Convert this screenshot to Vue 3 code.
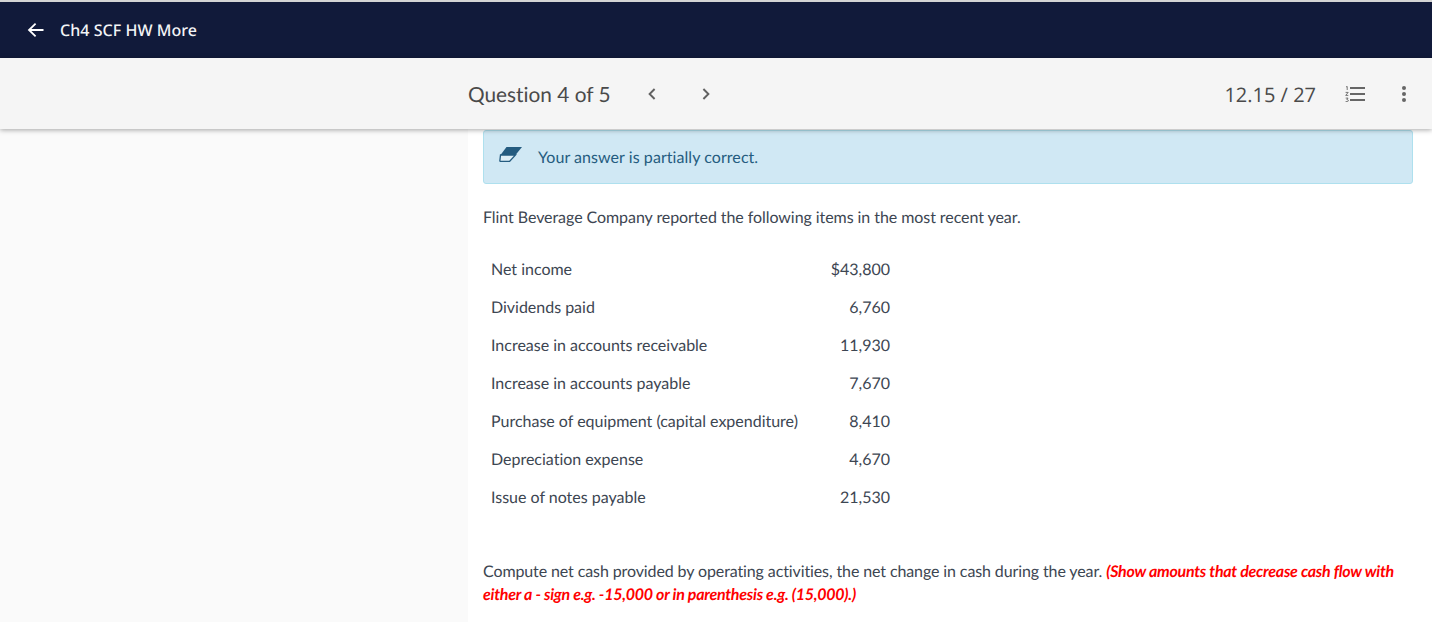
<script setup>
const rows = [
  ['Net income', '$43,800'],
  ['Dividends paid', '6,760'],
  ['Increase in accounts receivable', '11,930'],
  ['Increase in accounts payable', '7,670'],
  ['Purchase of equipment (capital expenditure)', '8,410'],
  ['Depreciation expense', '4,670'],
  ['Issue of notes payable', '21,530'],
]
</script>

<template>
  <div class="page">
    <header class="topbar">
      <svg class="back" width="18" height="18" viewBox="0 0 18 18">
        <path d="M16.5 9H2M8.6 2.6 2 9l6.6 6.4" fill="none" stroke="#fff" stroke-width="1.8" />
      </svg>
      <span class="title">Ch4 SCF HW More</span>
    </header>

    <div class="subbar">
      <div class="sub-inner">
        <span class="qnum">Question 4 of 5</span>
        <svg class="chev prev" width="10" height="14" viewBox="0 0 10 14">
          <path d="M7.6 2 2.6 7l5 5" fill="none" stroke="#616161" stroke-width="1.9" />
        </svg>
        <svg class="chev next" width="10" height="14" viewBox="0 0 10 14">
          <path d="M2.4 2l5 5-5 5" fill="none" stroke="#616161" stroke-width="1.9" />
        </svg>
        <span class="score">12.15 / 27</span>
        <svg class="list" width="20" height="16" viewBox="0 0 20 16">
          <path d="M5 2h15M5 8h15M5 14h15" stroke="#666" stroke-width="1.8" />
          <path d="M1 1 2.200.4V4M.6 6.400h2.600L.7 9.400h2.600M.7 12.100h2.400L1.800 13.400h.5l.9.600v1.100l-.9.500H.6" fill="none" stroke="#666" stroke-width=".9" />
        </svg>
        <svg class="dots" width="6" height="18" viewBox="0 0 6 18">
          <circle cx="3" cy="3" r="2" fill="#666" />
          <circle cx="3" cy="9" r="2" fill="#666" />
          <circle cx="3" cy="15" r="2" fill="#666" />
        </svg>
      </div>
    </div>

    <div class="body">
      <aside class="side"></aside>
      <main class="content">
        <div class="notice">
          <svg class="eraser" width="24" height="16" viewBox="0 0 24 16">
            <path d="M7.500 1H23l-6.500 8H1.500z" fill="#255c80" />
            <path d="M1.500 9h15l-6 6.500H1.800q-1.200 0-.9-1.200z" fill="#fff" fill-opacity=".3" stroke="#255c80" stroke-width="1.300" />
          </svg>
          <span>Your answer is partially correct.</span>
        </div>

        <p class="intro">Flint Beverage Company reported the following items in the most recent year.</p>

        <div class="items">
          <div v-for="row in rows" :key="row[0]" class="item">
            <span>{{ row[0] }}</span>
            <span class="amount">{{ row[1] }}</span>
          </div>
        </div>

        <p class="task">
          Compute net cash provided by operating activities, the net change in cash during the year.
          <em>(Show amounts that decrease cash flow with either a - sign e.g. -15,000 or in parenthesis e.g. (15,000).)</em>
        </p>
      </main>
    </div>
  </div>
</template>

<style>
html, body {
  margin: 0;
  background: #fff;
}
</style>

<style scoped>
.page {
  height: 622px;
  overflow: hidden;
  display: flex;
  flex-direction: column;
  font-family: Lato, sans-serif;
  font-variant-ligatures: none;
  text-rendering: geometricPrecision;
  color: #3d4652;
  border-top: 2px solid #d4d4d4;
  box-sizing: border-box;
}

.topbar {
  height: 56px;
  flex: none;
  background: #111a3a;
  display: flex;
  align-items: center;
  padding-left: 27px;
  color: #fff;
}

.back {
  margin-right: 15px;
}

.title {
  font-family: "Noto Sans", sans-serif;
  font-size: 16px;
  font-weight: 500;
  letter-spacing: 0.05px;
  color: #f3f4f6;
}

.subbar {
  height: 71px;
  flex: none;
  background: #f5f5f5;
  box-shadow: 0 1px 5px rgba(0, 0, 0, 0.35);
  position: relative;
  z-index: 2;
}

.sub-inner {
  height: 72px;
  margin-left: 468px;
  display: flex;
  align-items: center;
  color: #4a4a4a;
}

.qnum {
  font-size: 20.8px;
}

.prev {
  margin-left: 37px;
}

.next {
  margin-left: 44px;
}

.score {
  font-family: "Open Sans", sans-serif;
  font-size: 20px;
  margin-left: auto;
}

.list {
  margin-left: 29px;
  margin-bottom: 1px;
}

.dots {
  margin-left: 36px;
  margin-right: 25px;
  margin-bottom: 1px;
}

.body {
  flex: 1;
  display: grid;
  grid-template-columns: 468px 1fr;
  min-height: 0;
}

.side {
  background: #fafafa;
}

.content {
  padding: 1px 19px 0 15px;
  font-size: 16px;
}

.notice {
  height: 54px;
  box-sizing: border-box;
  border: 1px solid #aee0ee;
  border-radius: 3px;
  background: #d0e8f4;
  color: #255c80;
  display: flex;
  align-items: center;
  padding-left: 15px;
  gap: 15px;
  letter-spacing: 0.06px;
}

.eraser {
  margin-bottom: 6px;
}

.intro {
  margin: 24px 0 0;
  line-height: 20px;
  letter-spacing: -0.065px;
}

.items {
  margin-top: 22px;
}

.item {
  width: 407px;
  height: 38px;
  padding: 0 0 0 8px;
  box-sizing: border-box;
  display: flex;
  align-items: center;
  justify-content: space-between;
  letter-spacing: -0.01px;
}

.amount {
  text-align: right;
}

.task {
  margin: 44px 0 0;
  line-height: 23px;
  letter-spacing: -0.11px;
}

.task em {
  color: #f00;
  font-weight: 700;
  letter-spacing: -0.26px;
}
</style>
